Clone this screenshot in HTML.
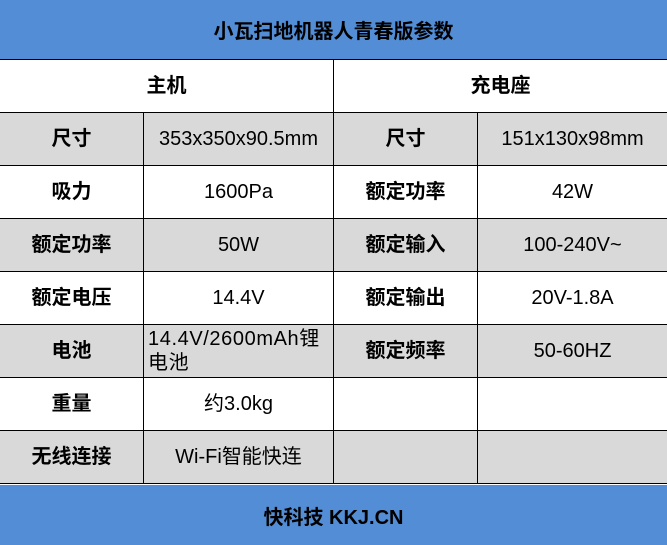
<!DOCTYPE html><html><head><meta charset="utf-8"><style>
body{margin:0;width:667px;height:545px;overflow:hidden;background:#fff;font-family:"Liberation Sans","Noto Sans CJK SC",sans-serif;color:#000}
.bar{position:absolute;left:0;width:667px;background:#538dd5;font-weight:bold;font-size:20px;display:flex;align-items:center;justify-content:center}
.c{position:absolute;display:flex;align-items:center;justify-content:center;text-align:center;font-size:20px;box-sizing:border-box;border-right:1.5px solid #000;border-bottom:1.5px solid #000;line-height:23px}
.g{background:#d9d9d9}.b{font-weight:bold}
</style></head><body>
<div class="bar" style="top:0;height:60px;border-bottom:1.5px solid #000;box-sizing:border-box">小瓦扫地机器人青春版参数</div>
<div class="bar" style="top:485px;height:60px">快科技 KKJ.CN</div>
<div class="c b" style="left:0;top:60px;width:334px;height:53px">主机</div>
<div class="c b" style="left:334px;top:60px;width:333px;height:53px;border-right:none">充电座</div>
<div id="rows"></div>
<script>
var d=[["尺寸","353x350x90.5mm","尺寸","151x130x98mm"],["吸力","1600Pa","额定功率","42W"],["额定功率","50W","额定输入","100-240V~"],["额定电压","14.4V","额定输出","20V-1.8A"],["电池","<div style='text-align:left;width:100%;padding-left:4px;font-size:20px;letter-spacing:0.6px;line-height:24px;white-space:nowrap'>14.4V/2600mAh锂<br>电池</div>","额定频率","50-60HZ"],["重量","约3.0kg","",""],["无线连接","Wi-Fi智能快连","",""]];
var xs=[0,144,334,478,667],h="";
d.forEach(function(r,i){var t=113+i*53;var g=i%2==0?" g":"";
for(var j=0;j<4;j++){h+='<div class="c'+g+(j%2==0?' b':'')+'" style="left:'+xs[j]+'px;top:'+t+'px;width:'+(xs[j+1]-xs[j])+'px;height:53px;'+(j==3?'border-right:none':'')+'">'+r[j]+'</div>';}});
document.getElementById("rows").innerHTML=h;
</script>
</body></html>
